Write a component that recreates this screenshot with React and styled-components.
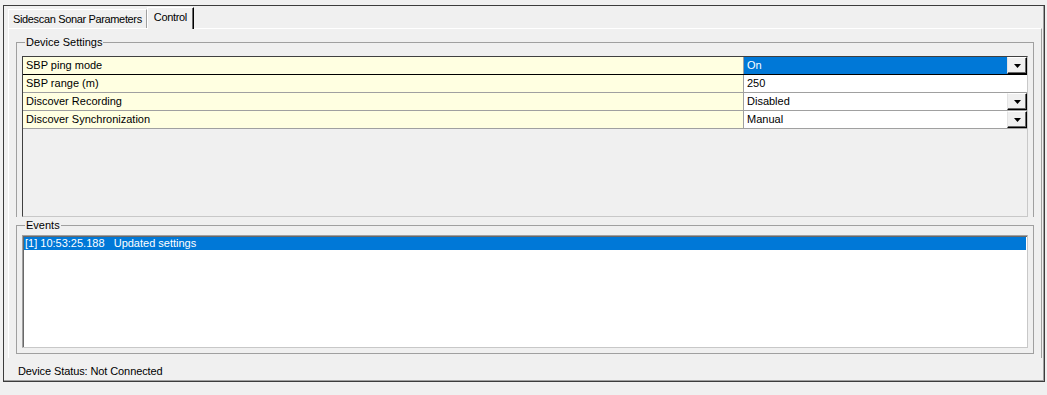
import styled, { createGlobalStyle } from 'styled-components'

const GlobalStyle = createGlobalStyle`
  html, body {
    margin: 0;
    padding: 0;
    background: #f0f0f0;
  }
  body {
    font-family: "Liberation Sans", Arial, sans-serif;
    font-size: 11px;
    color: #000;
  }
  * {
    box-sizing: border-box;
  }
`

const Page = styled.div`
  width: 1047px;
  height: 395px;
  padding: 5px 0 0 3px;
`

const Frame = styled.div`
  width: 1042px;
  height: 377px;
  border: 1px solid #3c3c3c;
  box-shadow: inset -1px -1px 0 #a0a0a0;
  display: flex;
  flex-direction: column;
`

const TabStrip = styled.div`
  display: flex;
  align-items: flex-end;
  height: 22px;
  padding-left: 4px;
`

const Tab = styled.div`
  position: relative;
  z-index: ${p => (p.$active ? 1 : 0)};
  height: ${p => (p.$active ? 22 : 19)}px;
  margin-bottom: ${p => (p.$active ? -1 : 0)}px;
  padding: 0 ${p => (p.$active ? 6 : 4)}px ${p => (p.$active ? 3 : 0)}px ${p => (p.$active ? 6 : 4)}px;
  display: flex;
  align-items: center;
  background: #f0f0f0;
  border-top: 1px solid #fff;
  border-left: 1px solid #fff;
  border-right: 1px solid ${p => (p.$active ? '#000' : '#a0a0a0')};
  box-shadow: ${p => (p.$active ? 'inset -1px 0 0 #696969' : 'none')};
  letter-spacing: -0.35px;
  white-space: nowrap;
`

const TabPage = styled.div`
  width: 1034px;
  margin: 0 2px 0 4px;
  padding: 7px 7px 4px 7px;
  border-top: 1px solid #fff;
  border-left: 1px solid #fff;
  border-right: 1px solid #a0a0a0;
  display: flex;
  flex-direction: column;
`

const GroupBox = styled.fieldset`
  margin: ${p => p.$gap || 0}px 0 0 0;
  padding: ${p => p.$padTop}px 5px ${p => (p.$open ? 0 : 5)}px 5px;
  border: 1px solid #a0a0a0;
  border-bottom: ${p => (p.$open ? 'none' : '1px solid #a0a0a0')};
  min-width: 0;
`

const Legend = styled.legend`
  padding: 0 1px;
  margin-left: 3px;
  line-height: 13px;
  font-size: 11px;
`

const PropertyGrid = styled.div`
  height: 161px;
  border: 1px solid;
  border-color: #404040 #c8c8c8 #c8c8c8 #404040;
  background: #f0f0f0;
  display: flex;
  flex-direction: column;
`

const Row = styled.div`
  display: grid;
  grid-template-columns: 721px 1fr;
  height: 18px;
  border-bottom: 1px solid ${p => (p.$selected ? '#000' : '#a0a0a0')};
`

const Label = styled.div`
  background: #ffffe1;
  border-right: 1px solid #a0a0a0;
  padding-left: 3px;
  line-height: 17px;
  white-space: nowrap;
`

const Value = styled.div`
  display: flex;
  background: #fff;
`

const ValueText = styled.div`
  flex: 1;
  padding-left: 3px;
  line-height: 17px;
  background: ${p => (p.$selected ? '#0078d7' : 'transparent')};
  color: ${p => (p.$selected ? '#fff' : '#000')};
`

const DropButton = styled.div`
  width: 20px;
  height: 17px;
  background: #f0f0f0;
  border: 1px solid;
  border-color: #fff #000 #000 #e3e3e3;
  box-shadow: inset -1px -1px 0 #696969;
  display: flex;
  align-items: center;
  justify-content: center;
`

const EventList = styled.div`
  height: 113px;
  border: 1px solid;
  border-color: #a0a0a0 #c8c8c8 #c8c8c8 #a0a0a0;
  box-shadow: inset 1px 1px 0 #696969;
  background: #fff;
  padding: 1px 1px 0 1px;
`

const EventItem = styled.div`
  background: ${p => (p.$selected ? '#0078d7' : 'transparent')};
  color: ${p => (p.$selected ? '#fff' : '#000')};
  line-height: 13px;
  padding-left: 1px;
  white-space: pre;
`

const Status = styled.div`
  margin-top: 7px;
  padding-left: 14px;
  line-height: 13px;
  letter-spacing: -0.1px;
`

const Arrow = () => (
  <svg width="7" height="4" viewBox="0 0 7 4">
    <polygon points="0,0 7,0 3.5,4" fill="#000" />
  </svg>
)

const settings = [
  { label: 'SBP ping mode', value: 'On', dropdown: true, selected: true },
  { label: 'SBP range (m)', value: '250', dropdown: false },
  { label: 'Discover Recording', value: 'Disabled', dropdown: true },
  { label: 'Discover Synchronization', value: 'Manual', dropdown: true },
]

const App = () => {
  return (
    <Page>
      <GlobalStyle />
      <Frame>
        <TabStrip>
          <Tab>Sidescan Sonar Parameters</Tab>
          <Tab $active>Control</Tab>
        </TabStrip>
        <TabPage>
          <GroupBox $padTop={7} $open>
            <Legend>Device Settings</Legend>
            <PropertyGrid>
              {settings.map(s => (
                <Row key={s.label} $selected={s.selected}>
                  <Label>{s.label}</Label>
                  <Value>
                    <ValueText $selected={s.selected}>{s.value}</ValueText>
                    {s.dropdown && (
                      <DropButton>
                        <Arrow />
                      </DropButton>
                    )}
                  </Value>
                </Row>
              ))}
            </PropertyGrid>
          </GroupBox>
          <GroupBox $padTop={3} $gap={2}>
            <Legend>Events</Legend>
            <EventList>
              <EventItem $selected>{'[1] 10:53:25.188   Updated settings'}</EventItem>
            </EventList>
          </GroupBox>
        </TabPage>
        <Status>Device Status: Not Connected</Status>
      </Frame>
    </Page>
  )
}

export default App
